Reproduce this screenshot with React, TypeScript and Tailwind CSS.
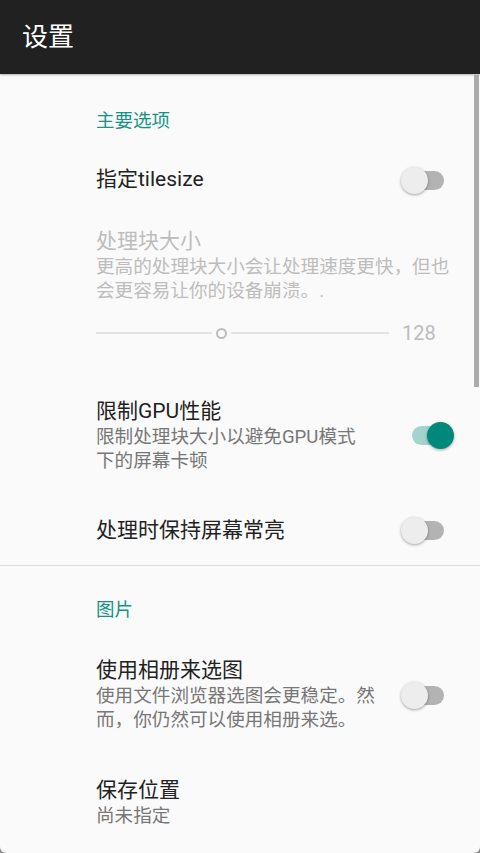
import React from "react";

const font = "font-['Roboto','Noto_Sans_CJK_SC',sans-serif]";

const Toggle = ({ on }: { on?: boolean }) =>
  on ? (
    <div className="relative h-[27px] w-[44px] shrink-0">
      <div className="absolute left-[2px] top-[4px] h-[19px] w-[34px] rounded-full bg-[#a3d3cd]" />
      <div className="absolute right-0 top-0 h-[27px] w-[27px] rounded-full bg-[#00897b] shadow-[0_1px_3px_rgba(0,0,0,0.35)]" />
    </div>
  ) : (
    <div className="relative h-[27px] w-[44px] shrink-0">
      <div className="absolute right-[1px] top-[5px] h-[19px] w-[37px] rounded-full bg-[#b3b3b3]" />
      <div className="absolute left-0 top-[1px] h-[27px] w-[27px] rounded-full bg-[#ededed] shadow-[0_1px_3px_rgba(0,0,0,0.35)]" />
    </div>
  );

const Category = ({ label }: { label: string }) => (
  <div className="h-[24px] pl-[96px] text-[18.5px] leading-[24px] text-[#159385]">{label}</div>
);

const Title = ({ children, muted }: { children: React.ReactNode; muted?: boolean }) => (
  <div className={`h-[26px] text-[21px] leading-[26px] ${muted ? "text-[#bdbdbd]" : "text-[#222222]"}`}>
    {children}
  </div>
);

const Summary = ({ lines, muted }: { lines: string[]; muted?: boolean }) => (
  <div className={`mt-[2px] text-[18.6px] leading-[23.5px] ${muted ? "text-[#bdbdbd]" : "text-[#777777]"}`}>
    {lines.map((l) => (
      <div key={l} className="whitespace-nowrap">
        {l}
      </div>
    ))}
  </div>
);

export default function App() {
  return (
    <div className={`h-[853px] w-[480px] overflow-hidden bg-[#8a8a8a] ${font}`}>
      <div className="relative flex h-full flex-col overflow-hidden rounded-b-[6px] bg-[#fafafa]">
        {/* Toolbar */}
        <header className="flex h-[74px] shrink-0 items-center bg-[#212121] pl-[22px] shadow-[0_1px_2px_rgba(0,0,0,0.3)]">
          <h1 className="text-[26px] text-white">设置</h1>
        </header>

        {/* 主要选项 */}
        <div className="pt-[35px]">
          <Category label="主要选项" />
        </div>

        <div className="flex h-[92px] items-center pl-[96px] pr-[35px]">
          <div className="flex-1">
            <Title>指定tilesize</Title>
          </div>
          <Toggle />
        </div>

        <div className="mt-[3px] pl-[96px]">
          <Title muted>处理块大小</Title>
          <Summary muted lines={["更高的处理块大小会让处理速度更快，但也", "会更容易让你的设备崩溃。."]} />
          <div className="mt-[10px] flex h-[40px] items-center">
            <div className="flex w-[293px] items-center">
              <div className="h-[2px] w-[116px] bg-[#e3e3e3]" />
              <div className="mx-[4px] h-[11px] w-[11px] rounded-full border-[2.5px] border-[#bdbdbd]" />
              <div className="h-[2px] flex-1 bg-[#e3e3e3]" />
            </div>
            <span className="ml-[13px] text-[20px] text-[#bdbdbd]">128</span>
          </div>
        </div>

        <div className="mt-[45px] flex items-center pl-[96px] pr-[26px]">
          <div className="flex-1">
            <Title>限制GPU性能</Title>
            <Summary lines={["限制处理块大小以避免GPU模式", "下的屏幕卡顿"]} />
          </div>
          <Toggle on />
        </div>

        <div className="mt-[43px] flex items-center pl-[96px] pr-[35px]">
          <div className="flex-1">
            <Title>处理时保持屏幕常亮</Title>
          </div>
          <Toggle />
        </div>

        <div className="mt-[22px] h-[1px] shrink-0 bg-[#dedede]" />

        {/* 图片 */}
        <div className="pt-[32px]">
          <Category label="图片" />
        </div>

        <div className="mt-[35px] flex items-center pl-[96px] pr-[35px]">
          <div className="flex-1">
            <Title>使用相册来选图</Title>
            <Summary lines={["使用文件浏览器选图会更稳定。然", "而，你仍然可以使用相册来选。"]} />
          </div>
          <Toggle />
        </div>

        <div className="mt-[45px] pl-[96px]">
          <Title>保存位置</Title>
          <Summary lines={["尚未指定"]} />
        </div>

        {/* scrollbar */}
        <div className="absolute right-[1px] top-[75px] h-[312px] w-[5px] bg-[#ababab]" />
      </div>
    </div>
  );
}
